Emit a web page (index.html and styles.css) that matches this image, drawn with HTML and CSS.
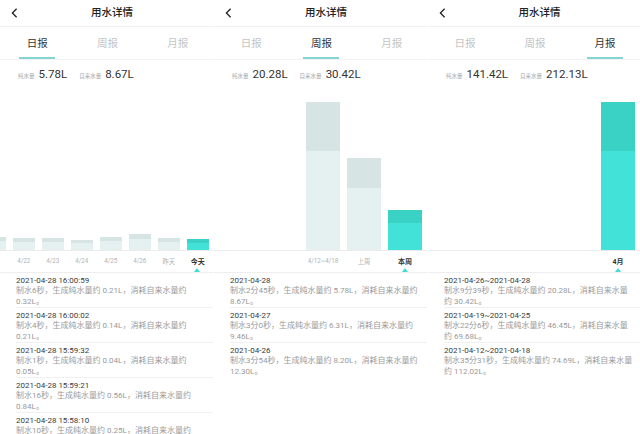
FILE: index.html
```html
<!DOCTYPE html>
<html lang="zh-CN">
<head>
<meta charset="utf-8">
<title>用水详情</title>
<link rel="stylesheet" href="styles.css">
</head>
<body>
<main class="screens">

  <!-- Panel 1: 日报 -->
  <section class="panel">
    <header class="topbar">
      <svg class="back" width="7" height="10" viewBox="0 0 7 10"><polyline points="5.6,0.7 1.4,5 5.6,9.3" fill="none" stroke="#222" stroke-width="1.3"/></svg>
      <h1 class="title">用水详情</h1>
      <span></span>
    </header>
    <nav class="tabs">
      <span class="tab active">日报</span>
      <span class="tab">周报</span>
      <span class="tab">月报</span>
    </nav>
    <div class="stats">
      <span class="lbl">纯水量</span><span class="val">5.78L</span>
      <span class="lbl lbl2">自来水量</span><span class="val">8.67L</span>
    </div>
    <div class="plot plot-day">
      <div class="bar" style="height:13px"><i class="up" style="height:4px"></i><i class="low"></i></div>
      <div class="bar" style="height:12px"><i class="up" style="height:4px"></i><i class="low"></i></div>
      <div class="bar" style="height:12px"><i class="up" style="height:4px"></i><i class="low"></i></div>
      <div class="bar" style="height:10px"><i class="up" style="height:3px"></i><i class="low"></i></div>
      <div class="bar" style="height:13px"><i class="up" style="height:4px"></i><i class="low"></i></div>
      <div class="bar" style="height:16px"><i class="up" style="height:5px"></i><i class="low"></i></div>
      <div class="bar" style="height:12px"><i class="up" style="height:4px"></i><i class="low"></i></div>
      <div class="bar cur" style="height:11px"><i class="up" style="height:4px"></i><i class="low"></i></div>
    </div>
    <div class="axis axis-day">
      <span class="lab"></span>
      <span class="lab">4/22</span>
      <span class="lab">4/23</span>
      <span class="lab">4/24</span>
      <span class="lab">4/25</span>
      <span class="lab">4/26</span>
      <span class="lab">昨天</span>
      <span class="lab cur">今天</span>
    </div>
    <ul class="records">
      <li><p class="time">2021-04-28 16:00:59</p><p class="desc">制水6秒，生成纯水量约 0.21L，消耗自来水量约<br>0.32L。</p></li>
      <li><p class="time">2021-04-28 16:00:02</p><p class="desc">制水4秒，生成纯水量约 0.14L，消耗自来水量约<br>0.21L。</p></li>
      <li><p class="time">2021-04-28 15:59:32</p><p class="desc">制水1秒，生成纯水量约 0.04L，消耗自来水量约<br>0.05L。</p></li>
      <li><p class="time">2021-04-28 15:59:21</p><p class="desc">制水16秒，生成纯水量约 0.56L，消耗自来水量约<br>0.84L。</p></li>
      <li><p class="time">2021-04-28 15:58:10</p><p class="desc">制水10秒，生成纯水量约 0.25L，消耗自来水量约<br>0.38L。</p></li>
    </ul>
  </section>

  <!-- Panel 2: 周报 -->
  <section class="panel">
    <header class="topbar">
      <svg class="back" width="7" height="10" viewBox="0 0 7 10"><polyline points="5.6,0.7 1.4,5 5.6,9.3" fill="none" stroke="#222" stroke-width="1.3"/></svg>
      <h1 class="title">用水详情</h1>
      <span></span>
    </header>
    <nav class="tabs">
      <span class="tab">日报</span>
      <span class="tab active">周报</span>
      <span class="tab">月报</span>
    </nav>
    <div class="stats">
      <span class="lbl">纯水量</span><span class="val">20.28L</span>
      <span class="lbl lbl2">自来水量</span><span class="val">30.42L</span>
    </div>
    <div class="plot plot-wide">
      <div class="bar" style="height:148px"><i class="up" style="height:49px"></i><i class="low"></i></div>
      <div class="bar" style="height:92px"><i class="up" style="height:30px"></i><i class="low"></i></div>
      <div class="bar cur" style="height:40px"><i class="up" style="height:13px"></i><i class="low"></i></div>
    </div>
    <div class="axis axis-wide">
      <span class="lab">4/12~4/18</span>
      <span class="lab">上周</span>
      <span class="lab cur">本周</span>
    </div>
    <ul class="records">
      <li><p class="time">2021-04-28</p><p class="desc">制水2分45秒，生成纯水量约 5.78L，消耗自来水量约<br>8.67L。</p></li>
      <li><p class="time">2021-04-27</p><p class="desc">制水3分0秒，生成纯水量约 6.31L，消耗自来水量约<br>9.46L。</p></li>
      <li class="last"><p class="time">2021-04-26</p><p class="desc">制水3分54秒，生成纯水量约 8.20L，消耗自来水量约<br>12.30L。</p></li>
    </ul>
  </section>

  <!-- Panel 3: 月报 -->
  <section class="panel">
    <header class="topbar">
      <svg class="back" width="7" height="10" viewBox="0 0 7 10"><polyline points="5.6,0.7 1.4,5 5.6,9.3" fill="none" stroke="#222" stroke-width="1.3"/></svg>
      <h1 class="title">用水详情</h1>
      <span></span>
    </header>
    <nav class="tabs">
      <span class="tab">日报</span>
      <span class="tab">周报</span>
      <span class="tab active">月报</span>
    </nav>
    <div class="stats">
      <span class="lbl">纯水量</span><span class="val">141.42L</span>
      <span class="lbl lbl2">自来水量</span><span class="val">212.13L</span>
    </div>
    <div class="plot plot-wide">
      <div class="bar cur" style="height:148px"><i class="up" style="height:49px"></i><i class="low"></i></div>
    </div>
    <div class="axis axis-wide">
      <span class="lab cur">4月</span>
    </div>
    <ul class="records">
      <li><p class="time">2021-04-26~2021-04-28</p><p class="desc">制水9分39秒，生成纯水量约 20.28L，消耗自来水量<br>约 30.42L。</p></li>
      <li><p class="time">2021-04-19~2021-04-25</p><p class="desc">制水22分6秒，生成纯水量约 46.45L，消耗自来水量<br>约 69.68L。</p></li>
      <li class="last"><p class="time">2021-04-12~2021-04-18</p><p class="desc">制水35分31秒，生成纯水量约 74.69L，消耗自来水量<br>约 112.02L。</p></li>
    </ul>
  </section>

</main>
</body>
</html>
```

FILE: styles.css
```css
* { box-sizing: border-box; }

html, body {
  margin: 0;
  padding: 0;
  background: #fff;
}

body {
  width: 640px;
  height: 434px;
  overflow: hidden;
  font-family: "Roboto", "Noto Sans CJK SC", sans-serif;
  color: #333;
}

.screens {
  display: grid;
  grid-template-columns: 213px 213px 212px;
  column-gap: 1px;
  height: 434px;
}

.panel {
  display: flex;
  flex-direction: column;
  overflow: hidden;
  background: #fff;
  height: 434px;
}

/* header */
.topbar {
  height: 27px;
  flex: none;
  display: grid;
  grid-template-columns: 1fr auto 1fr;
  align-items: center;
  border-bottom: 1px solid #f1f1f1;
  padding-left: 11px;
}

.back { display: block; }

.title {
  margin: 0;
  font-size: 10.5px;
  font-weight: 500;
  color: #222;
  line-height: 1;
}

/* tabs */
.tabs {
  height: 33px;
  flex: none;
  display: grid;
  grid-template-columns: repeat(3, 1fr);
  border-bottom: 1px solid #f3f3f3;
  padding-left: 2px;
}

.tab {
  position: relative;
  display: flex;
  align-items: center;
  justify-content: center;
  font-size: 10.5px;
  color: #c4c4c4;
  padding-bottom: 1px;
}

.tab.active { color: #333; }

.tab.active::after {
  content: "";
  position: absolute;
  bottom: 0;
  left: 50%;
  width: 36px;
  height: 2px;
  margin-left: -18px;
  background: #84d5d0;
}

/* stats */
.stats {
  height: 26px;
  flex: none;
  display: flex;
  align-items: baseline;
  padding-left: 18px;
  padding-top: 7px;
}

.lbl {
  font-size: 5.5px;
  color: #a8a8a8;
  margin-right: 4px;
}

.lbl2 { margin-left: 12px; }

.val {
  font-size: 11.5px;
  color: #333;
}

/* chart */
.plot {
  height: 165px;
  flex: none;
  display: flex;
  align-items: flex-end;
  justify-content: flex-end;
  border-bottom: 1px solid #ececec;
  overflow: hidden;
}

.plot-day { gap: 6.5px; padding-right: 4px; }
.plot-wide { gap: 7px; padding-right: 5px; }

.bar {
  flex: none;
  display: flex;
  flex-direction: column;
}

.plot-day .bar { width: 22.5px; }
.plot-wide .bar { width: 34px; }

.bar .up {
  display: block;
  flex: none;
  background: #d6e4e4;
}

.bar .low {
  display: block;
  flex: 1;
  background: #e5f1f1;
}

.bar.cur .up { background: #3bd2c6; }
.bar.cur .low { background: #42e2d8; }

/* axis labels */
.axis {
  height: 22px;
  flex: none;
  display: flex;
  justify-content: flex-end;
  border-bottom: 1px solid #eeeeee;
  overflow: hidden;
}

.axis-day { gap: 6.5px; padding-right: 4px; }
.axis-wide { gap: 7px; padding-right: 5px; }

.lab {
  position: relative;
  flex: none;
  display: flex;
  align-items: center;
  justify-content: center;
  white-space: nowrap;
  font-size: 6.3px;
  color: #b3b3b3;
  padding-bottom: 1px;
}

.axis-day .lab { width: 22.5px; }
.axis-wide .lab { width: 34px; }

.lab.cur {
  color: #333;
  font-weight: 700;
  font-size: 7px;
}

.lab.cur::after {
  content: "";
  position: absolute;
  bottom: 0;
  left: 50%;
  margin-left: -3.5px;
  border-left: 3.5px solid transparent;
  border-right: 3.5px solid transparent;
  border-bottom: 4px solid #42dcd2;
}

/* records */
.records {
  list-style: none;
  margin: 0;
  padding: 0;
}

.records li {
  margin-left: 16px;
  padding-top: 3px;
  height: 35px;
  border-bottom: 1px solid #f0f0f0;
}

.records li.last { border-bottom: none; }

.records p {
  margin: 0;
  font-size: 8px;
  line-height: 10.3px;
  white-space: nowrap;
}

.time { color: #3a3a3a; }
.desc { color: #9a9a9a; }
```
